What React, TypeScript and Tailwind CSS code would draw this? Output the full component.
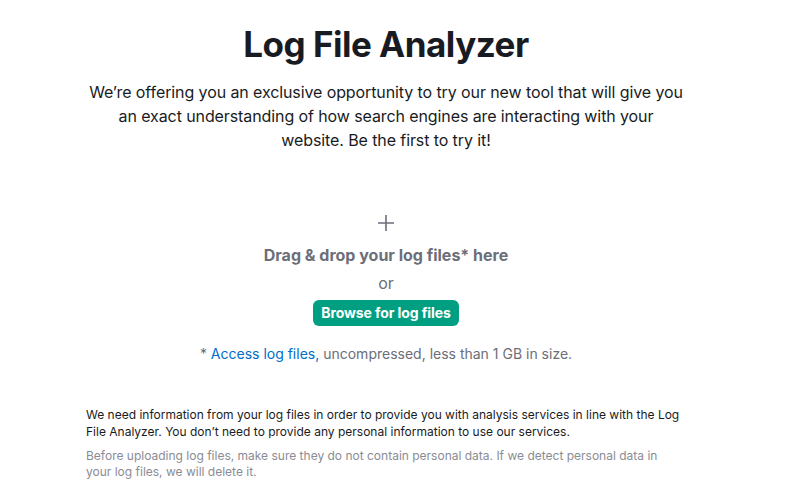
export default function App() {
  return (
    <div className="min-h-[483px] bg-white font-['Inter',sans-serif] text-[#191b23]">
      <div className="ml-[86px] w-[600px] pt-[22px]">
        <h1 className="text-center text-[35px] font-bold leading-[44px] tracking-[-0.5px]">Log File Analyzer</h1>
        <p className="mt-[14px] text-center text-[16px] leading-[24px] tracking-[-0.1px] text-[#191b23]">
          We’re offering you an exclusive opportunity to try our new tool that will give you an exact understanding of how search engines are interacting with your website. Be the first to try it!
        </p>

        <div className="mt-[62px] flex flex-col items-center">
          <svg width="18" height="18" viewBox="0 0 18 18" className="text-[#6c6e79]">
            <path d="M9 1v16M1 9h16" stroke="currentColor" strokeWidth="1.6" fill="none" />
          </svg>
          <p className="mt-[12px] text-[16px] font-bold leading-[22px] text-[#6c6e79]">Drag &amp; drop your log files* here</p>
          <p className="mt-[6px] text-[16px] leading-[22px] text-[#6c6e79]">or</p>
          <button className="mt-[6px] rounded-md bg-[#009f81] px-[8px] py-[4px] text-[14px] font-bold leading-[18px] tracking-[-0.1px] text-white">
            Browse for log files
          </button>
          <p className="mt-[18px] text-[14px] leading-[20px] text-[#6c6e79]">
            * <span className="text-[#006dca]">Access log files,</span> uncompressed, less than 1 GB in size.
          </p>
        </div>

        <p className="mt-[42px] text-[12px] leading-[17px] text-[#191b23]">
          We need information from your log files in order to provide you with analysis services in line with the Log File Analyzer. You don’t need to provide any personal information to use our services.
        </p>
        <p className="mt-[8px] w-[580px] text-[12px] leading-[16px] text-[#8a8c95]">
          Before uploading log files, make sure they do not contain personal data. If we detect personal data in your log files, we will delete it.
        </p>
      </div>
    </div>
  );
}
